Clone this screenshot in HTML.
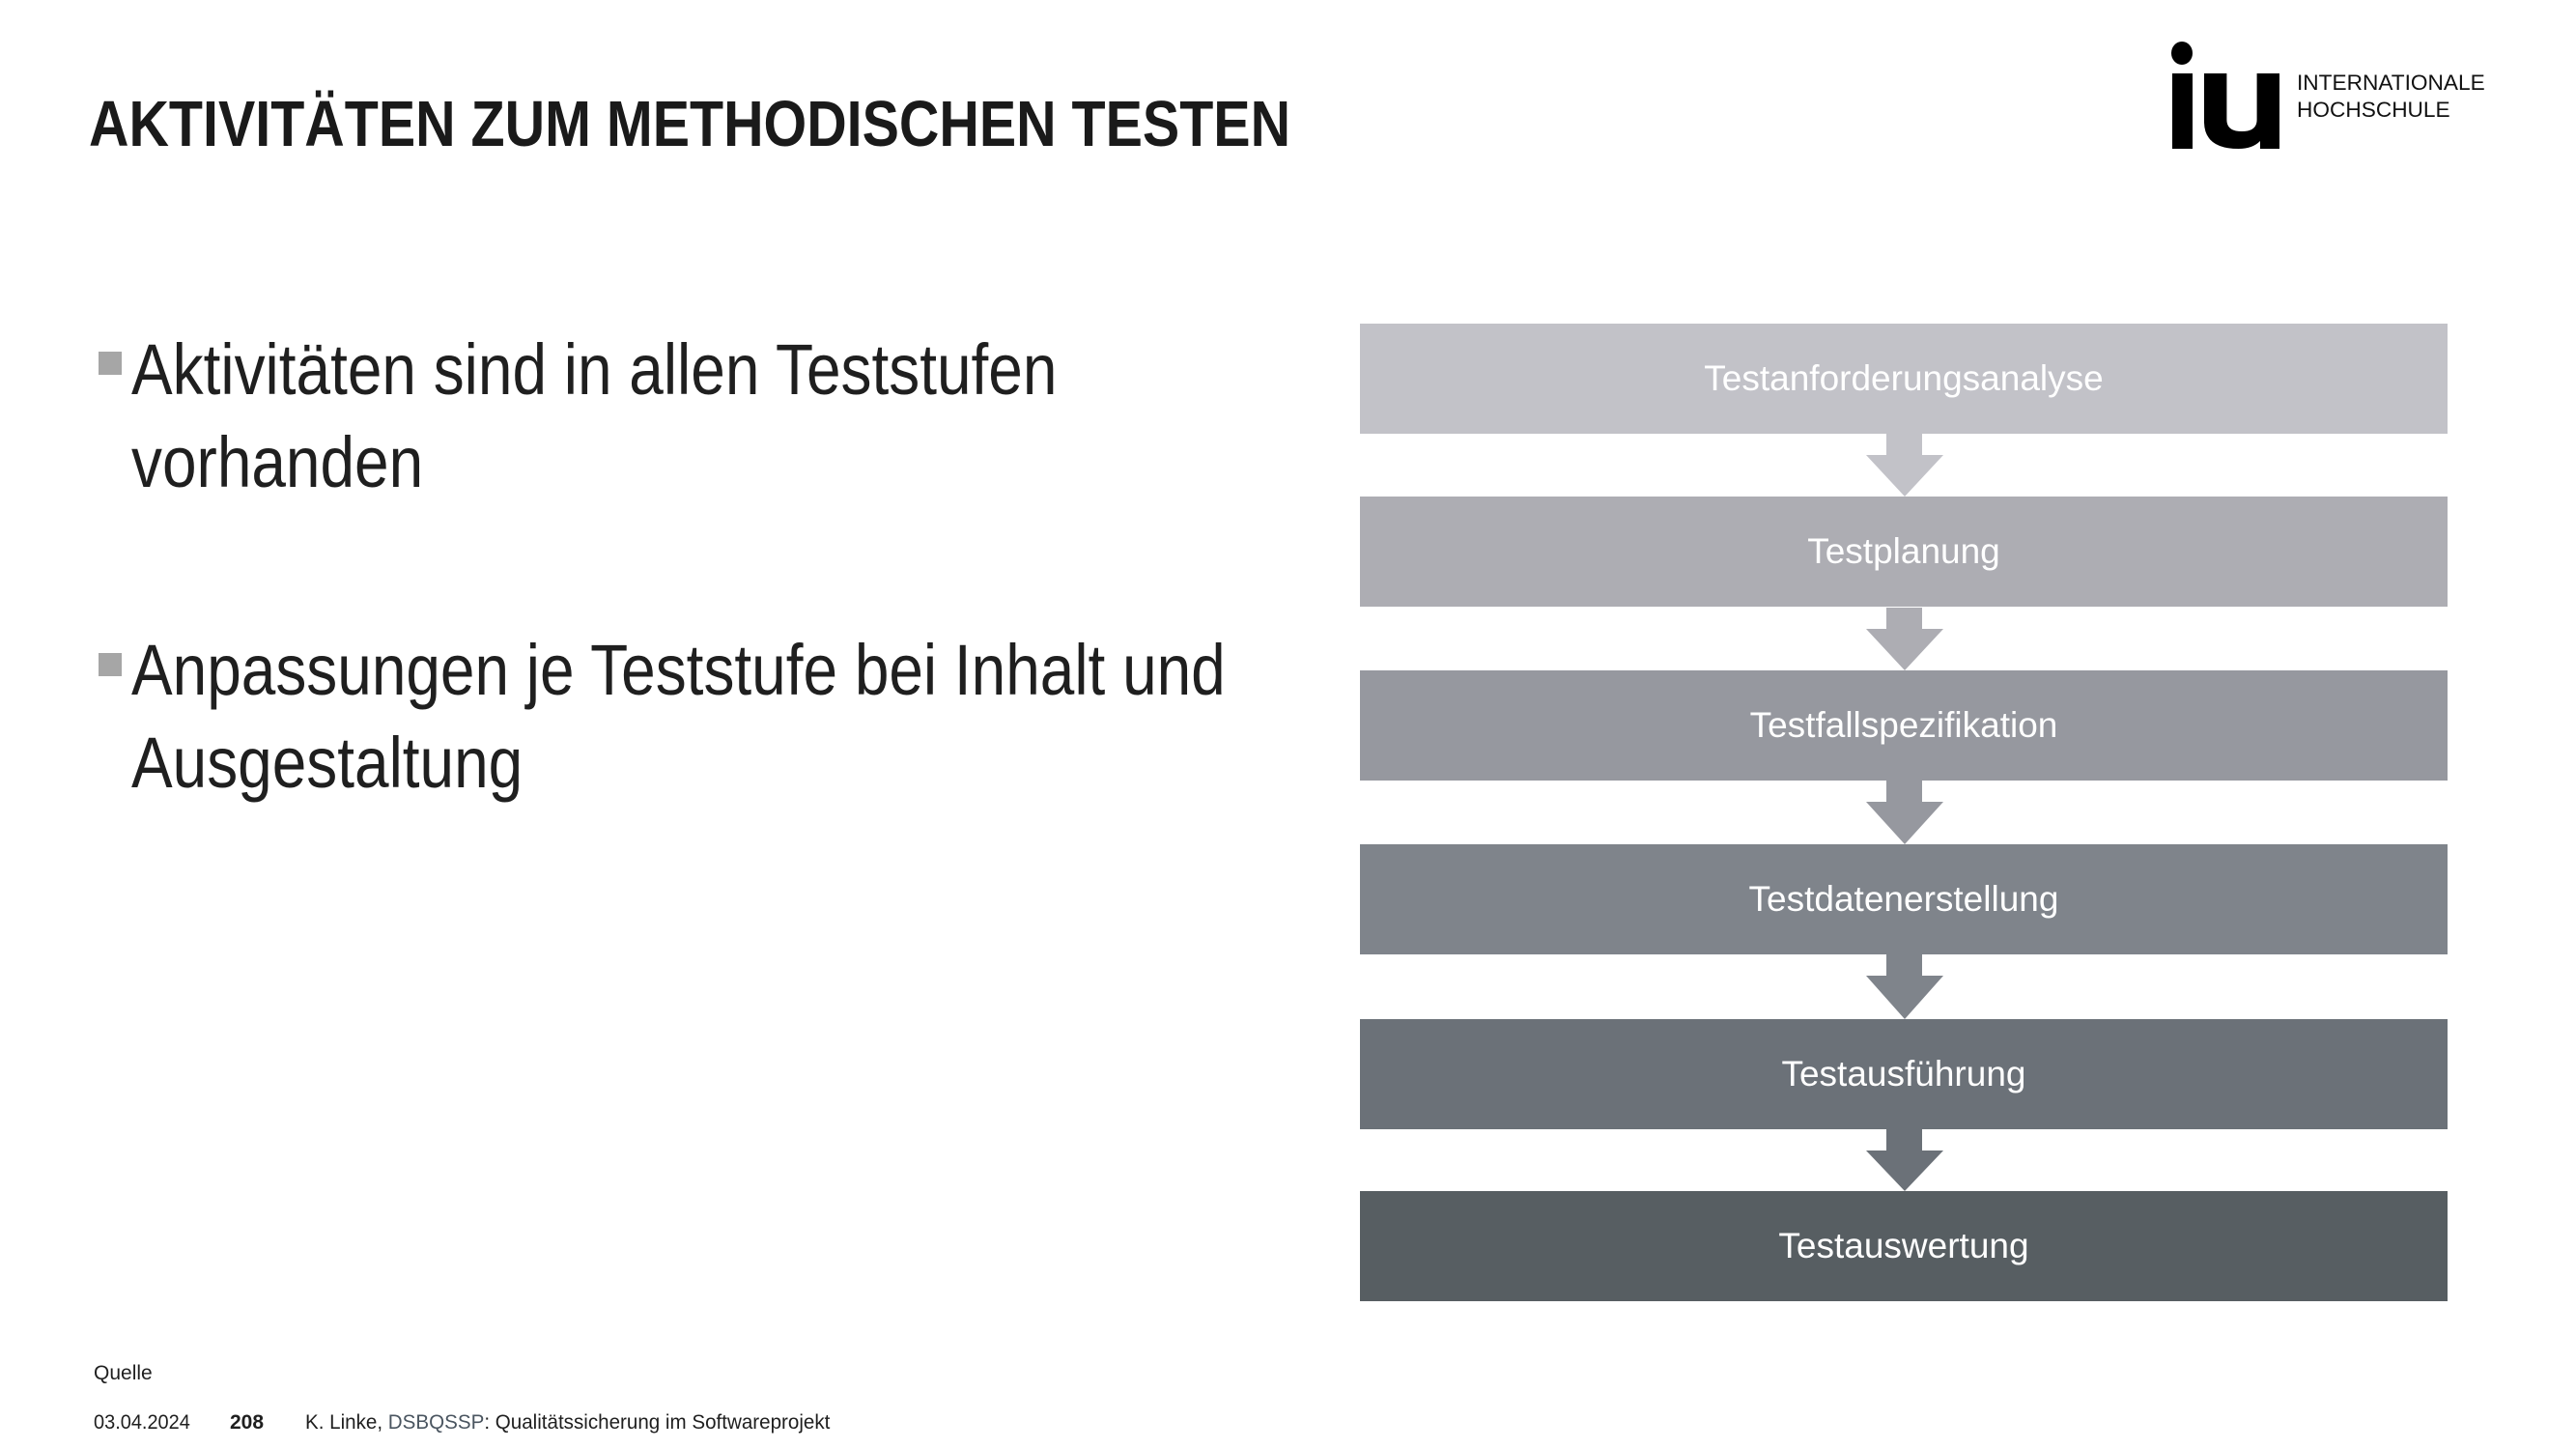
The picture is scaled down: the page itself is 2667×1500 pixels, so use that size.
<!DOCTYPE html>
<html><head><meta charset="utf-8"><style>
*{margin:0;padding:0;box-sizing:border-box}
body{width:2667px;height:1500px;background:#fff;position:relative;overflow:hidden;font-family:"Liberation Sans",sans-serif;color:#1f1f1f}
.a{position:absolute;white-space:nowrap}
.s{display:inline-block;transform-origin:0 0}
.box{position:absolute;left:1408px;width:1126px;height:114px;color:#fff;font-size:37px;line-height:114px;text-align:center}
.box span{display:inline-block;transform:scaleX(1)}
.arr{position:absolute}
</style></head><body>
<div class="a" style="left:92px;top:94px;font-size:67px;font-weight:bold;line-height:70px;color:#1a1a1a"><span class="s" style="transform:scaleX(.857)">AKTIVITÄTEN ZUM METHODISCHEN TESTEN</span></div>

<!-- logo -->
<div class="a" style="left:2248px;top:43px;width:22px;height:24px;border-radius:50%;background:#000"></div>
<div class="a" style="left:2249px;top:76px;width:21px;height:78px;background:#000"></div>
<svg class="a" style="left:2282px;top:76px" width="78" height="78" viewBox="0 0 70 78" preserveAspectRatio="none"><path d="M0 0H21V48Q21 60 35 60Q49 60 49 48V0H70V78H52V70Q45 78 32 78Q0 78 0 50Z" fill="#000"/></svg>
<div class="a" style="left:2378px;top:72px;font-size:22px;line-height:28px;color:#111"><span class="s" style="transform:scaleX(1.03)">INTERNATIONALE<br>HOCHSCHULE</span></div>

<!-- bullets -->
<div class="a" style="left:102px;top:364px;width:24px;height:24px;background:#a6a6a6"></div>
<div class="a" style="left:102px;top:676px;width:24px;height:24px;background:#a6a6a6"></div>
<div class="a" style="left:136px;top:335px;font-size:74px;line-height:96px"><span class="s" style="transform:scaleX(.864)">Aktivitäten sind in allen Teststufen<br>vorhanden</span></div>
<div class="a" style="left:136px;top:646px;font-size:74px;line-height:96px"><span class="s" style="transform:scaleX(.864)">Anpassungen je Teststufe bei Inhalt und<br>Ausgestaltung</span></div>

<!-- flow -->
<div class="box" style="top:335px;background:#c2c2c8"><span>Testanforderungsanalyse</span></div>
<div class="box" style="top:514px;background:#adadb3"><span>Testplanung</span></div>
<div class="box" style="top:694px;background:#96989f"><span>Testfallspezifikation</span></div>
<div class="box" style="top:874px;background:#7f848b"><span>Testdatenerstellung</span></div>
<div class="box" style="top:1055px;background:#6b7178"><span>Testausführung</span></div>
<div class="box" style="top:1233px;background:#575e62"><span>Testauswertung</span></div>

<svg class="arr" style="left:1931px;top:449px" width="82" height="65"><path d="M22 0H59V22H81L41 65L1 22H22Z" fill="#c2c2c8"/></svg>
<svg class="arr" style="left:1931px;top:629px" width="82" height="65"><path d="M22 0H59V22H81L41 65L1 22H22Z" fill="#adadb3"/></svg>
<svg class="arr" style="left:1931px;top:808px" width="82" height="66"><path d="M22 0H59V22H81L41 66L1 22H22Z" fill="#96989f"/></svg>
<svg class="arr" style="left:1931px;top:988px" width="82" height="67"><path d="M22 0H59V22H81L41 67L1 22H22Z" fill="#7f848b"/></svg>
<svg class="arr" style="left:1931px;top:1169px" width="82" height="64"><path d="M22 0H59V22H81L41 64L1 22H22Z" fill="#6b7178"/></svg>

<!-- footer -->
<div class="a" style="left:97px;top:1410px;font-size:21px;line-height:24px"><span class="s">Quelle</span></div>
<div class="a" style="left:97px;top:1461px;font-size:21px;line-height:24px"><span class="s" style="transform:scaleX(.95)">03.04.2024</span></div>
<div class="a" style="left:238px;top:1461px;font-size:21px;line-height:24px;font-weight:bold"><span class="s">208</span></div>
<div class="a" style="left:316px;top:1461px;font-size:21px;line-height:24px"><span class="s" style="transform:scaleX(.98)">K. Linke, <span style="color:#4a5560">DSBQSSP</span>: Qualitätssicherung im Softwareprojekt</span></div>
</body></html>
